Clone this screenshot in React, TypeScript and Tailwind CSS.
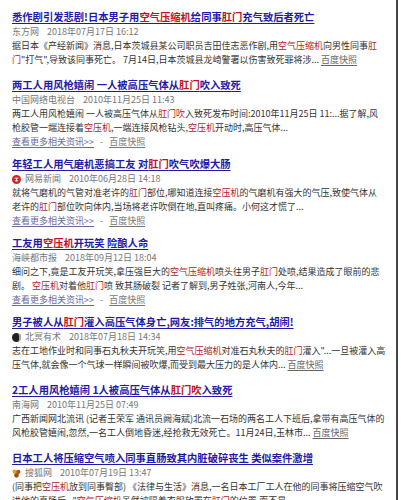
import React from 'react';

type Item = {
  title: string;
  source: string;
  time: string;
  icon?: 'netease' | 'dark' | 'sohu';
  lines: string[];
  more?: boolean;
};

// {text} marks a highlighted keyword, [text] marks an underlined link
const items: Item[] = [
  {
    title: '悉作剧引发悲剧!日本男子用{空气压缩机}给同事{肛门}充气致后者死亡',
    source: '东方网',
    time: '2018年07月17日 16:12',
    lines: [
      '据日本《产经新闻》消息,日本茨城县某公司职员吉田佳志恶作剧,用{空气压缩机}向男性同事{肛}',
      '{门}"打气",导致该同事死亡。 7月14日,日本茨城县龙崎警署以伤害致死罪将涉... [百度快照]',
    ],
  },
  {
    title: '两工人用风枪嬉闹 一人被高压气体从{肛门}吹入致死',
    source: '中国网络电视台',
    time: '2010年11月25日 11:43',
    lines: [
      '两工人用风枪嬉闹 一人被高压气体从{肛门吹}入致死发布时间:2010年11月25日 11:...据了解,风',
      '枪胶管一端连接着{空压机},一端连接风枪钻头,{空压机}开动时,高压气体...',
    ],
    more: true,
  },
  {
    title: '年轻工人用气磨机恶搞工友 对{肛门}吹气吹爆大肠',
    source: '网易新闻',
    time: '2010年06月28日 14:18',
    icon: 'netease',
    lines: [
      '就将气磨机的气管对准老许的{肛门}部位,哪知道连接{空压机}的气磨机有强大的气压,致使气体从',
      '老许的{肛门}部位吹向体内,当场将老许吹倒在地,直叫疼痛。小何这才慌了...',
    ],
    more: true,
  },
  {
    title: '工友用{空压机}开玩笑 险酿人命',
    source: '海峡都市报',
    time: '2018年09月12日 18:04',
    lines: [
      '细问之下,竟是工友开玩笑,拿压强巨大的{空气压缩机}喷头往男子{肛门}处喷,结果造成了眼前的悲',
      '剧。 {空压机}对着他{肛门}喷 致其肠破裂 记者了解到,男子姓张,河南人,今年...',
    ],
    more: true,
  },
  {
    title: '男子被人从{肛门}灌入高压气体身亡,网友:排气的地方充气,胡闹!',
    source: '北冥有术',
    time: '2018年07月18日 14:34',
    icon: 'dark',
    lines: [
      '志在工地作业时和同事石丸秋夫开玩笑,用{空气压缩机}对准石丸秋夫的{肛门}灌入"...一旦被灌入高',
      '压气体,就会像一个气球一样瞬间被吹爆,而受到最大压力的是人体内... [百度快照]',
    ],
  },
  {
    title: '2工人用风枪嬉闹 1人被高压气体从{肛门吹}入致死',
    source: '南海网',
    time: '2010年11月25日 07:49',
    lines: [
      '广西新闻网北流讯 (记者王荣军 通讯员阙海斌)北流一石场的两名工人下班后,拿带有高压气体的',
      '风枪胶管嬉闹,忽然,一名工人倒地昏迷,经抢救无效死亡。11月24日,玉林市... [百度快照]',
    ],
  },
  {
    title: '日本工人将压缩空气喷入同事直肠致其内脏破碎丧生 类似案件激增',
    source: '搜狐网',
    time: '2010年07月19日 13:47',
    icon: 'sohu',
    lines: [
      '(同事把{空压机}放到同事臀部) 《法律与生活》消息,一名日本工厂工人在他的同事将压缩空气吹',
      '进他的直肠后..."{空气压缩机}虽然被隔着衣服放置在{肛门}的位置,而不是...',
    ],
  },
];

function Rich({ text, red }: { text: string; red: string }) {
  const parts = text.split(/(\{[^}]+\}|\[[^\]]+\])/);
  return (
    <>
      {parts.map((p, i) => {
        if (p.startsWith('{')) return <span key={i} className={red}>{p.slice(1, -1)}</span>;
        if (p.startsWith('['))
          return (
            <span key={i} className="text-[#666] underline underline-offset-2">
              {p.slice(1, -1)}
            </span>
          );
        return <React.Fragment key={i}>{p}</React.Fragment>;
      })}
    </>
  );
}

function SourceIcon({ kind }: { kind: Item['icon'] }) {
  if (kind === 'netease')
    return (
      <svg width="9" height="9" viewBox="0 0 10 10" className="mr-[4px]">
        <circle cx="5" cy="5" r="5" fill="#d4232b" />
        <path d="M3 3.5h4M5 3.5v3.5M3.3 6.5h3.4" stroke="#fff" strokeWidth="1" />
      </svg>
    );
  if (kind === 'dark')
    return (
      <svg width="9" height="9" viewBox="0 0 10 10" className="mr-[4px]">
        <circle cx="5" cy="5" r="5" fill="#222" />
        <path d="M5 0a5 5 0 0 1 0 10a3 5 0 0 0 0-10z" fill="#bbb" />
      </svg>
    );
  if (kind === 'sohu')
    return (
      <svg width="9" height="9" viewBox="0 0 10 10" className="mr-[4px]">
        <circle cx="3" cy="3" r="2.4" fill="#e3a21a" />
        <circle cx="7" cy="3.2" r="2.4" fill="#c7461d" />
        <circle cx="5" cy="7" r="2.6" fill="#8a5a1a" />
      </svg>
    );
  return null;
}

function Result({ item }: { item: Item }) {
  return (
    <div className={item.more ? 'mb-[7px]' : 'mb-[10px]'}>
      <div className="h-[16px] whitespace-nowrap text-[10.3px] font-bold leading-[16px] text-[#1f1aa8] underline underline-offset-2">
        <Rich text={item.title} red="text-[#c0141b]" />
      </div>
      <div className="flex h-[14px] items-center whitespace-nowrap text-[9px] leading-[14px] text-[#777]">
        <SourceIcon kind={item.icon} />
        <span>{item.source}</span>
        <span className="ml-[8px]">{item.time}</span>
      </div>
      {item.lines.map((l, i) => (
        <div key={i} className="h-[14px] whitespace-nowrap text-[9px] leading-[14px] text-[#333]">
          <Rich text={l} red="text-[#b3201f]" />
        </div>
      ))}
      {item.more && (
        <div className="h-[14px] whitespace-nowrap text-[9px] leading-[14px] text-[#777]">
          <span className="text-[#6a6a9a] underline underline-offset-2">查看更多相关资讯&gt;&gt;</span>
          <span className="mx-[6px]">-</span>
          <span className="underline underline-offset-2">百度快照</span>
        </div>
      )}
    </div>
  );
}

export default function App() {
  return (
    <div
      className="h-[500px] w-[401px] overflow-hidden bg-white"
      style={{ fontFamily: '"Noto Sans CJK SC", "Liberation Sans", sans-serif' }}
    >
      <div className="h-full w-[398px] border-r-[2px] border-[#444] pl-[12px] pt-[9px]">
        {items.map((it, i) => (
          <Result key={i} item={it} />
        ))}
      </div>
    </div>
  );
}
